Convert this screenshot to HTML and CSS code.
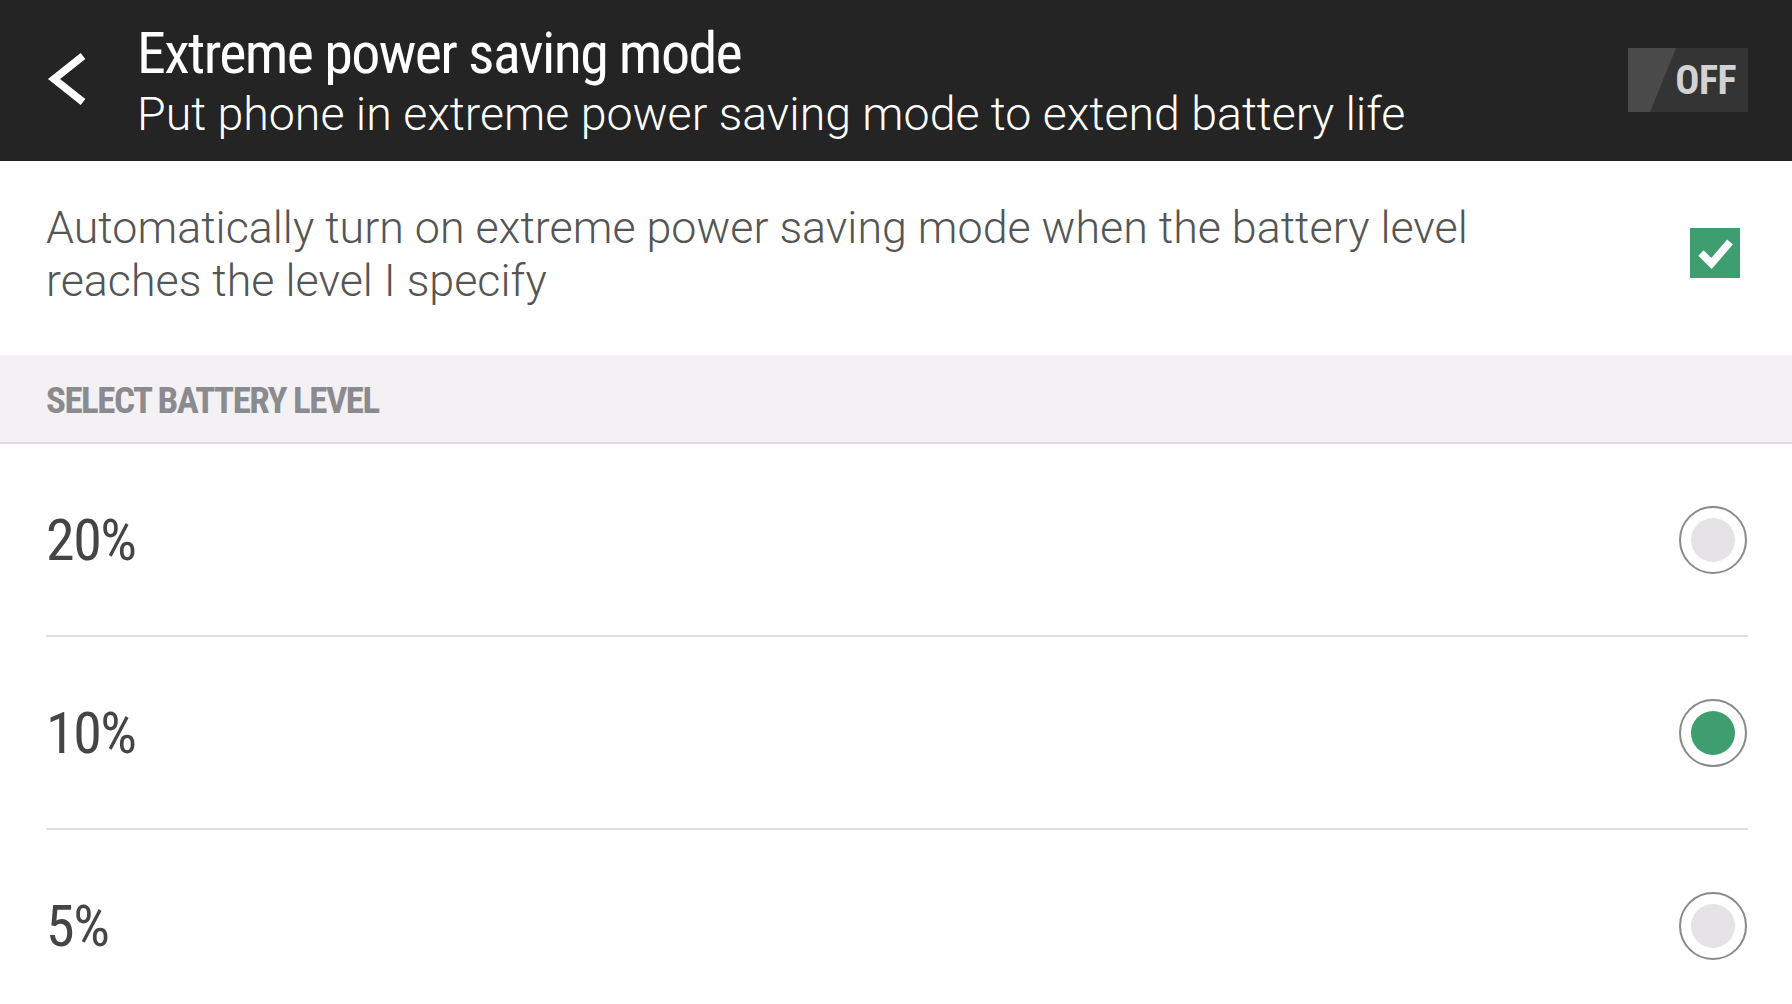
FILE: index.html
```html
<!DOCTYPE html>
<html>
<head>
<meta charset="utf-8">
<link rel="stylesheet" href="styles.css">
</head>
<body>
<div class="screen">
  <header class="header">
    <div class="back">
      <svg width="60" height="80" viewBox="0 0 60 80"><path d="M53 16 L24 39 L53 62" fill="none" stroke="#ffffff" stroke-width="7.5" stroke-linecap="butt" stroke-linejoin="miter"/></svg>
    </div>
    <div class="titles">
      <div class="title">Extreme power saving mode</div>
      <div class="subtitle">Put phone in extreme power saving mode to extend battery life</div>
    </div>
    <div class="toggle">
      <div class="toggle-thumb"></div>
      <span class="toggle-label">OFF</span>
    </div>
  </header>

  <section class="auto-row">
    <div class="auto-text">Automatically turn on extreme power saving mode when the battery level<br>reaches the level I specify</div>
    <div class="checkbox">
      <svg width="50" height="50" viewBox="0 0 50 50"><path d="M11 25 L21.5 35.5 L40 14" fill="none" stroke="#ffffff" stroke-width="7.5" stroke-linecap="butt" stroke-linejoin="miter"/></svg>
    </div>
  </section>

  <div class="section-head">SELECT BATTERY LEVEL</div>

  <ul class="levels">
    <li class="level"><span class="level-label">20%</span><span class="radio"><span class="radio-dot"></span></span></li>
    <li class="level"><span class="level-label">10%</span><span class="radio"><span class="radio-dot on"></span></span></li>
    <li class="level"><span class="level-label">5%</span><span class="radio"><span class="radio-dot"></span></span></li>
  </ul>
</div>
</body>
</html>
```

FILE: styles.css
```css
html, body {
  margin: 0;
  padding: 0;
  background: #ffffff;
}
body {
  width: 1792px;
  height: 1004px;
  overflow: hidden;
  font-family: "Roboto", "Liberation Sans", sans-serif;
}
.screen {
  display: flex;
  flex-direction: column;
}
.header {
  height: 161px;
  flex: none;
  background: #232423;
  display: flex;
  align-items: center;
}
.back {
  width: 137px;
  height: 161px;
  padding-left: 30px;
  padding-top: 40px;
  box-sizing: border-box;
  align-self: flex-start;
}
.back svg {
  display: block;
}
.titles {
  flex: 1;
  align-self: flex-start;
  padding-top: 21px;
  display: flex;
  flex-direction: column;
}
.title {
  font-family: "Roboto Condensed", "Liberation Sans Narrow", "DejaVu Sans Condensed", sans-serif;
  font-size: 58px;
  line-height: 64px;
  letter-spacing: -1.6px;
  color: #ffffff;
}
.subtitle {
  font-family: "Roboto", sans-serif;
  font-weight: 300;
  font-size: 46.5px;
  line-height: 58px;
  color: #ffffff;
}
.toggle {
  position: relative;
  width: 120px;
  height: 64px;
  margin-right: 44px;
  margin-bottom: 1px;
  background: #333433;
  overflow: hidden;
  display: flex;
  align-items: center;
  justify-content: flex-end;
}
.toggle-thumb {
  position: absolute;
  left: 0;
  top: 0;
  width: 48px;
  height: 64px;
  background: #4b4b4b;
  clip-path: polygon(0 0, 100% 0, 46% 100%, 0 100%);
}
.toggle-label {
  position: relative;
  font-family: "Roboto Condensed", "Liberation Sans Narrow", "DejaVu Sans Condensed", sans-serif;
  font-weight: bold;
  font-size: 40px;
  letter-spacing: -0.5px;
  color: #d2d2d2;
  padding-right: 12px;
}
.auto-row {
  height: 194px;
  flex: none;
  display: flex;
  align-items: flex-start;
  padding-left: 46px;
  padding-right: 52px;
  box-sizing: border-box;
}
.auto-text {
  flex: 1;
  padding-top: 40px;
  font-weight: 300;
  font-size: 44.8px;
  line-height: 53px;
  color: #555555;
}
.checkbox {
  margin-top: 67px;
  width: 50px;
  height: 50px;
  background: #3f9e6f;
  display: flex;
}
.section-head {
  height: 84px;
  flex: none;
  background: #f4f1f4;
  border-bottom: 2px solid #dddbdd;
  display: flex;
  align-items: center;
  padding-left: 46px;
  padding-top: 3px;
  font-family: "Roboto Condensed", "Liberation Sans Narrow", "DejaVu Sans Condensed", sans-serif;
  font-weight: bold;
  font-size: 37px;
  letter-spacing: -1.5px;
  color: #8b8a8f;
}
.levels {
  list-style: none;
  margin: 0;
  padding: 0 44px 0 46px;
}
.level {
  height: 191px;
  border-bottom: 2px solid #dedede;
  display: flex;
  align-items: center;
  justify-content: space-between;
}
.level-label {
  font-family: "Roboto Condensed", "Liberation Sans Narrow", "DejaVu Sans Condensed", sans-serif;
  font-size: 58px;
  letter-spacing: -1.5px;
  color: #454545;
}
.radio {
  width: 64px;
  height: 64px;
  border: 2px solid #8a8a8a;
  border-radius: 50%;
  display: flex;
  align-items: center;
  justify-content: center;
  margin-right: 1px;
}
.radio-dot {
  width: 44px;
  height: 44px;
  border-radius: 50%;
  background: #e6e3e6;
}
.radio-dot.on {
  background: #3f9e6f;
}
```
